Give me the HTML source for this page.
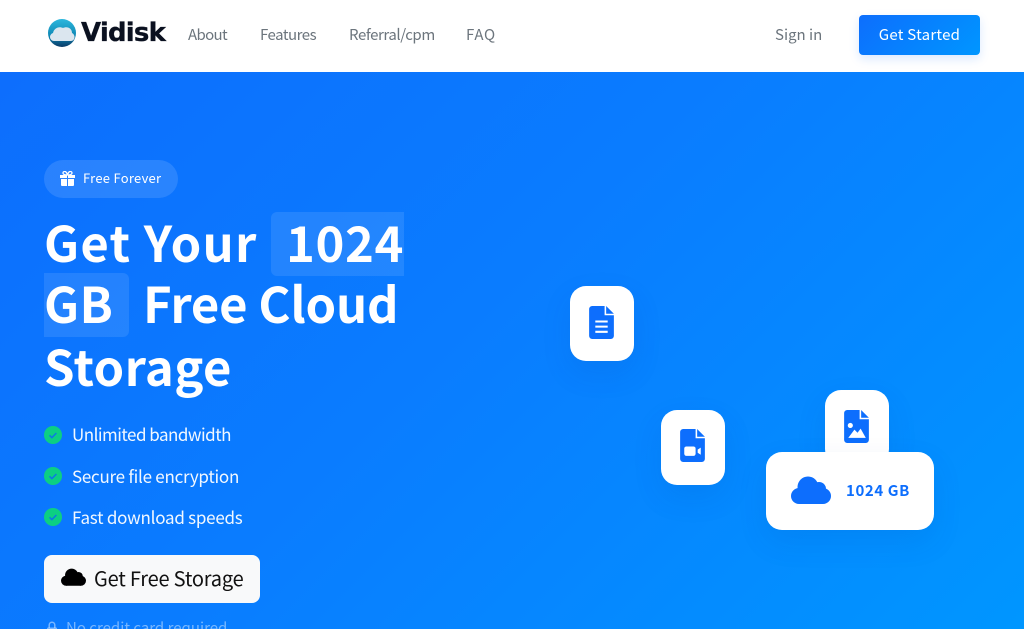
<!DOCTYPE html>
<html><head><meta charset="utf-8"><style>
*{box-sizing:border-box;margin:0;padding:0}
html,body{width:1024px;height:629px;overflow:hidden;background:#fff;font-family:"Noto Sans CJK JP","Liberation Sans",sans-serif}
.a{position:absolute;white-space:nowrap}
.hero{position:absolute;left:0;top:72px;width:1024px;height:557px;background:linear-gradient(135deg,#0d6efd 0%,#0a7cff 45%,#0096ff 100%);overflow:hidden}
.nav{font-size:15px;color:#6c757d;line-height:20px;top:25px}
.h{font-size:49px;font-weight:700;color:#fff;line-height:61px;left:44px;letter-spacing:.4px}
.hl{position:absolute;background:rgba(255,255,255,.1)}
.li{font-size:17px;color:#f2f8ff;left:72px;line-height:24px}
.card{position:absolute;background:#fff;border-radius:16px;box-shadow:0 12px 30px rgba(0,60,160,.1)}
</style></head><body>
<svg class="a" style="left:47px;top:19px" width="31" height="29" viewBox="0 0 31 29"><defs><linearGradient id="l" x1="0" y1="0" x2="0" y2="1"><stop offset="0" stop-color="#2cb7dd"/><stop offset=".6" stop-color="#0f88b5"/><stop offset="1" stop-color="#0b3a66"/></linearGradient></defs><circle cx="15" cy="14" r="14" fill="url(#l)"/><path d="M7 22c-4 0-6-6-1-8 1-5 6-7 10-5 4-2 9 0 9 5 4 2 3 8-1 8z" fill="#dbe6ef"/></svg>
<div class="a" style="left:81px;top:15px;font:700 26px/36px 'DejaVu Sans',sans-serif;color:#0b1120;letter-spacing:-.8px;-webkit-text-stroke:.3px #0b1120">Vidisk</div>
<div class="a nav" style="left:188px;letter-spacing:-.65px">About</div>
<div class="a nav" style="left:260px;letter-spacing:-.5px">Features</div>
<div class="a nav" style="left:349px;letter-spacing:-.42px">Referral/cpm</div>
<div class="a nav" style="left:466px;letter-spacing:.7px">FAQ</div>
<div class="a nav" style="left:775px">Sign in</div>
<div class="a" style="left:859px;top:15px;width:121px;height:40px;border-radius:4px;background:linear-gradient(135deg,#0d6efd,#0096ff);color:#fff;font-size:15px;line-height:39px;text-align:center;letter-spacing:.25px;box-shadow:0 4px 10px rgba(13,110,253,.15)">Get Started</div>
<div class="hero"></div>
<div class="a" style="left:44px;top:160px;width:134px;height:38px;border-radius:19px;background:rgba(255,255,255,.12)"></div>
<svg class="a" style="left:60px;top:171px" width="15" height="15" viewBox="0 0 15 15" fill="#fff"><path d="M0 4h7v3H0zM8 4h7v3H8zM1 8h6v7H2a1 1 0 0 1-1-1zM8 8h6v6a1 1 0 0 1-1 1H8z"/><path d="M7.5 4C5 4 3 3.500 3 2s2-2 3-1 1.500 3 1.500 3zM7.500 4C10 4 12 3.500 12 2s-2-2-3-1-1.500 3-1.500 3z" fill="none" stroke="#fff" stroke-width="1.300"/></svg>
<div class="a" style="left:83px;top:168px;font-size:13px;line-height:20px;color:#fff;letter-spacing:.27px">Free Forever</div>
<div class="hl" style="left:271px;top:212px;width:133px;height:64px;border-radius:6px 0 0 6px"></div>
<div class="hl" style="left:44px;top:273px;width:85px;height:64px;border-radius:0 6px 6px 0"></div>
<div class="a h" style="top:211px;letter-spacing:1.25px">Get Your</div>
<div class="a h" style="top:211px;left:286px;letter-spacing:.6px">1024</div>
<div class="a h" style="top:272px">GB</div>
<div class="a h" style="top:272px;left:143px;letter-spacing:-.2px">Free Cloud</div>
<div class="a h" style="top:335px">Storage</div>
<svg class="a" style="left:44px;top:426px" width="18" height="18" viewBox="0 0 18 18"><circle cx="9" cy="9" r="9" fill="#0ccf83"/><path d="M5.500 9.300l2.400 2.300 4.500-4.600" fill="none" stroke="#0d7ce0" stroke-width="1.600"/></svg>
<div class="a li" style="top:422px;letter-spacing:-.52px">Unlimited bandwidth</div>
<svg class="a" style="left:44px;top:467px" width="18" height="18" viewBox="0 0 18 18"><circle cx="9" cy="9" r="9" fill="#0ccf83"/><path d="M5.500 9.300l2.400 2.300 4.500-4.600" fill="none" stroke="#0d7ce0" stroke-width="1.600"/></svg>
<div class="a li" style="top:464px;letter-spacing:-.26px">Secure file encryption</div>
<svg class="a" style="left:44px;top:508px" width="18" height="18" viewBox="0 0 18 18"><circle cx="9" cy="9" r="9" fill="#0ccf83"/><path d="M5.500 9.300l2.400 2.300 4.500-4.600" fill="none" stroke="#0d7ce0" stroke-width="1.600"/></svg>
<div class="a li" style="top:505px;letter-spacing:-.25px">Fast download speeds</div>
<div class="a" style="left:44px;top:555px;width:216px;height:48px;border-radius:8px;background:#f8f9fa"></div>
<svg class="a" style="left:61px;top:568px" width="25" height="18" viewBox="0 0 40 28" fill="#000"><circle cx="8" cy="20" r="8"/><circle cx="17" cy="11" r="10.500"/><circle cx="28" cy="13" r="7"/><circle cx="32" cy="20" r="8"/><rect x="8" y="14" width="24" height="14"/></svg>
<div class="a" style="left:94px;top:563px;font-size:20px;line-height:29px;color:#111;letter-spacing:-.2px">Get Free Storage</div>
<svg class="a" style="left:46px;top:621px" width="12" height="14" viewBox="0 0 12 14"><path d="M3.200 7V4a2.800 2.800 0 0 1 5.600 0v3" fill="none" stroke="rgba(255,255,255,.45)" stroke-width="1.500"/><rect x="1" y="6.500" width="10" height="7" rx="1" fill="rgba(255,255,255,.45)"/></svg>
<div class="a" style="left:66px;top:617px;font-size:15px;line-height:22px;color:rgba(255,255,255,.45)">No credit card required</div>
<div class="card" style="left:570px;top:286px;width:64px;height:75px"></div>
<svg class="a" style="left:589px;top:306px" width="25" height="33" viewBox="0 0 24 32"><path d="M3 0h12v9h9v20a3 3 0 0 1-3 3H3a3 3 0 0 1-3-3V3a3 3 0 0 1 3-3z" fill="#0d6efd"/><path d="M16.500 0L24 7.500h-7.500z" fill="#0d6efd"/><path d="M6 15h12M6 20h12M6 25h12" stroke="#fff" stroke-width="2"/></svg>
<div class="card" style="left:661px;top:410px;width:64px;height:75px"></div>
<svg class="a" style="left:680px;top:429px" width="25" height="33" viewBox="0 0 24 32"><path d="M3 0h12v9h9v20a3 3 0 0 1-3 3H3a3 3 0 0 1-3-3V3a3 3 0 0 1 3-3z" fill="#0d6efd"/><path d="M16.500 0L24 7.500h-7.500z" fill="#0d6efd"/><rect x="4" y="17" width="11" height="9" rx="2" fill="#fff"/><path d="M17 20l3-2v7l-3-2z" fill="#fff"/></svg>
<div class="card" style="left:825px;top:390px;width:64px;height:75px"></div>
<svg class="a" style="left:844px;top:410px" width="25" height="33" viewBox="0 0 24 32"><path d="M3 0h12v9h9v20a3 3 0 0 1-3 3H3a3 3 0 0 1-3-3V3a3 3 0 0 1 3-3z" fill="#0d6efd"/><path d="M16.500 0L24 7.500h-7.500z" fill="#0d6efd"/><circle cx="6" cy="15" r="2.500" fill="#fff"/><path d="M4 27l6-8 3 3 3-4 5 9z" fill="#fff"/></svg>
<div class="card" style="left:766px;top:452px;width:168px;height:78px"></div>
<svg class="a" style="left:791px;top:476px" width="40" height="28" viewBox="0 0 40 28" fill="#0d6efd"><circle cx="8" cy="20" r="8"/><circle cx="17" cy="11" r="10.500"/><circle cx="28" cy="13" r="7"/><circle cx="32" cy="20" r="8"/><rect x="8" y="14" width="24" height="14"/></svg>
<div class="a" style="left:846px;top:481px;font-size:15px;font-weight:700;line-height:20px;color:#0d6efd;letter-spacing:.6px">1024 GB</div>
</body></html>
